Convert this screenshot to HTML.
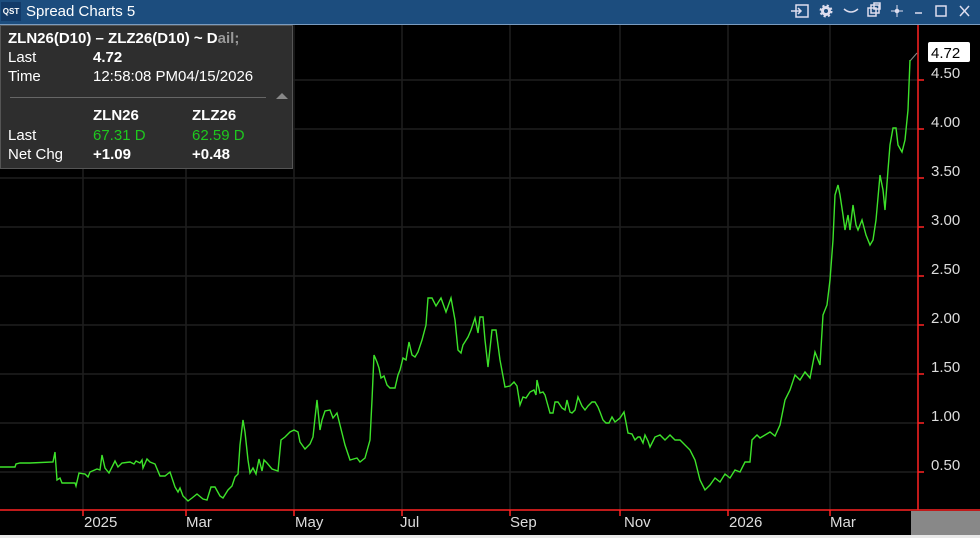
<!DOCTYPE html>
<html><head><meta charset="utf-8"><style>
body{margin:0;width:980px;height:538px;background:#000;overflow:hidden;font-family:"Liberation Sans",sans-serif;position:relative}
.tb{position:absolute;left:0;top:0;width:980px;height:24px;background:#1c4d7e;border-bottom:1px solid #7a9cc0}
.tb .t{position:absolute;left:26px;top:3px;color:#fff;font-size:15px}
.tb .q{position:absolute;left:1px;top:2px;width:20px;height:19px;background:#123a68;color:#fff;font-size:8px;font-weight:bold;line-height:19px;text-align:center}
.tip{position:absolute;left:0;top:25px;width:291px;height:142px;background:#2e2e2e;border:1px solid #555;color:#fff;font-size:15px}
.tip div{position:absolute;white-space:nowrap}
.g{color:#1ec81e}
.ax{position:absolute;color:#ddd;font-size:15px}
</style></head><body>
<div class="tb"><div class="q">QST</div><div class="t">Spread Charts 5</div>
<svg style="position:absolute;left:780px;top:0" width="200" height="24" fill="none" stroke="#dde" stroke-width="1.5">
<rect x="16" y="5" width="12" height="12"/><path d="M11 11h10M18 8l3 3-3 3"/>
<circle cx="46" cy="11" r="5" fill="#dde" stroke-width="3" stroke-dasharray="2 2"/><circle cx="46" cy="11" r="2" fill="#1c4d7e" stroke="none"/>
<path d="M64 9q7 6 14 0"/>
<rect x="88" y="8" width="8" height="8"/><rect x="91" y="5" width="8" height="8"/><rect x="94" y="3" width="6" height="6"/>
<path d="M117 5v12M111 11h12" stroke-width="1"/><circle cx="117" cy="11" r="1.5"/>
<path d="M135 13h7"/><rect x="156" y="6" width="10" height="10"/><path d="M180 6l9 10M189 6l-9 10"/>
</svg></div>
<svg style="position:absolute;left:0;top:0" width="980" height="538">
<g stroke="#1f1f1f" stroke-width="1.5">
<path d="M0 80H918M0 129H918M0 178H918M0 227H918M0 276H918M0 325H918M0 374H918M0 423H918M0 472H918"/>
<path d="M83 25V510M186 25V510M294 25V510M402 25V510M510 25V510M620 25V510M728 25V510M830 25V510"/>
</g>
<path d="M918 25V510M0 510H980" stroke="#f22" stroke-width="1.5"/>
<g stroke="#f22" stroke-width="1.5"><path d="M918 80h6M918 129h6M918 178h6M918 227h6M918 276h6M918 325h6M918 374h6M918 423h6M918 472h6M83 510v6M186 510v6M294 510v6M402 510v6M510 510v6M620 510v6M728 510v6M830 510v6"/></g>
<rect x="911" y="511" width="69" height="24" fill="#888"/>
<rect x="0" y="535" width="980" height="3" fill="#e8e8e8"/>
<path d="M910 61l7-8" stroke="#888"/>
<rect x="928" y="42" width="42" height="20" rx="2" fill="#fff"/>
<text x="931" y="58" font-family="Liberation Sans" font-size="15" fill="#000">4.72</text>
<polyline fill="none" stroke="#3de22a" stroke-width="1.4" points="0,467 15,467 16,464 20,463 30,463 53,462 55,452 57,480 60,478 62,483 75,483 76,486 79,473 85,474 88,477 90,472 97,469 100,470 102,455 105,468 109,473 113,465 115,461 118,467 122,463 130,462 134,464 136,461 140,463 142,460 143,468 147,459 150,462 155,464 160,476 165,476 170,472 175,487 178,492 180,488 183,496 188,501 192,498 197,494 203,499 207,500 211,487 215,487 220,496 223,498 228,490 232,486 235,477 238,474 240,445 243,420 245,432 248,460 250,473 253,468 256,474 259,459 262,471 264,460 267,463 272,469 278,471 281,440 285,437 290,432 294,430 298,432 300,442 305,449 310,444 313,437 315,418 317,400 320,430 322,420 325,411 330,410 333,418 337,413 340,425 345,445 350,460 357,458 360,462 365,458 370,440 372,400 374,355 377,362 379,368 381,378 384,376 387,385 390,388 395,388 398,375 400,370 403,358 406,360 409,342 412,355 415,357 418,352 422,340 426,325 428,298 432,298 436,306 441,298 446,312 451,298 455,320 458,350 461,353 463,345 468,337 471,330 475,318 478,333 480,317 483,317 485,340 488,367 492,330 496,330 500,360 505,387 510,386 514,382 517,386 520,405 523,397 526,398 530,392 534,390 536,395 537,380 540,393 543,392 545,395 550,413 553,413 555,402 558,402 562,408 565,410 567,400 570,412 572,413 575,410 578,397 582,406 585,410 588,406 592,402 595,402 598,407 600,412 603,420 606,423 609,423 612,417 615,422 620,418 624,412 628,433 632,434 635,440 638,437 640,437 643,443 645,435 648,441 650,447 652,443 655,437 660,435 665,440 670,435 675,440 680,440 685,445 690,450 695,460 700,480 705,490 710,485 715,478 720,482 725,474 730,478 735,470 740,472 745,462 750,462 752,440 757,435 760,438 765,435 770,432 775,436 780,425 785,400 790,390 795,375 800,380 805,372 810,378 815,352 820,365 823,315 827,305 830,280 833,240 835,195 838,185 840,195 843,215 845,230 848,215 850,230 853,205 856,225 858,230 862,220 866,235 870,245 873,240 876,220 880,175 883,190 885,210 888,170 890,145 893,128 896,128 898,145 902,152 905,140 908,110 910,60"/>
</svg>
<div class="ax" style="left:931px;top:65px">4.50</div>
<div class="ax" style="left:931px;top:114px">4.00</div>
<div class="ax" style="left:931px;top:163px">3.50</div>
<div class="ax" style="left:931px;top:212px">3.00</div>
<div class="ax" style="left:931px;top:261px">2.50</div>
<div class="ax" style="left:931px;top:310px">2.00</div>
<div class="ax" style="left:931px;top:359px">1.50</div>
<div class="ax" style="left:931px;top:408px">1.00</div>
<div class="ax" style="left:931px;top:457px">0.50</div>
<div class="ax" style="left:84px;top:514px">2025</div>
<div class="ax" style="left:186px;top:514px">Mar</div>
<div class="ax" style="left:295px;top:514px">May</div>
<div class="ax" style="left:400px;top:514px">Jul</div>
<div class="ax" style="left:510px;top:514px">Sep</div>
<div class="ax" style="left:624px;top:514px">Nov</div>
<div class="ax" style="left:729px;top:514px">2026</div>
<div class="ax" style="left:830px;top:514px">Mar</div>
<div class="tip">
<div style="left:7px;top:4px;font-weight:bold">ZLN26(D10) – ZLZ26(D10) ~ D<span style="color:#999">ail;</span></div>
<div style="left:7px;top:23px">Last</div><div style="left:92px;top:23px;font-weight:bold">4.72</div>
<div style="left:7px;top:42px">Time</div><div style="left:92px;top:42px">12:58:08 PM04/15/2026</div>
<div style="left:9px;top:71px;width:256px;height:1px;background:#666"></div>
<div style="left:275px;top:67px;width:0;height:0;border-left:6px solid transparent;border-right:6px solid transparent;border-bottom:6px solid #888"></div>
<div style="left:92px;top:81px;font-weight:bold">ZLN26</div><div style="left:191px;top:81px;font-weight:bold">ZLZ26</div>
<div style="left:7px;top:101px">Last</div><div class="g" style="left:92px;top:101px">67.31 D</div><div class="g" style="left:191px;top:101px">62.59 D</div>
<div style="left:7px;top:120px">Net Chg</div><div style="left:92px;top:120px;font-weight:bold">+1.09</div><div style="left:191px;top:120px;font-weight:bold">+0.48</div>
</div>
</body></html>
